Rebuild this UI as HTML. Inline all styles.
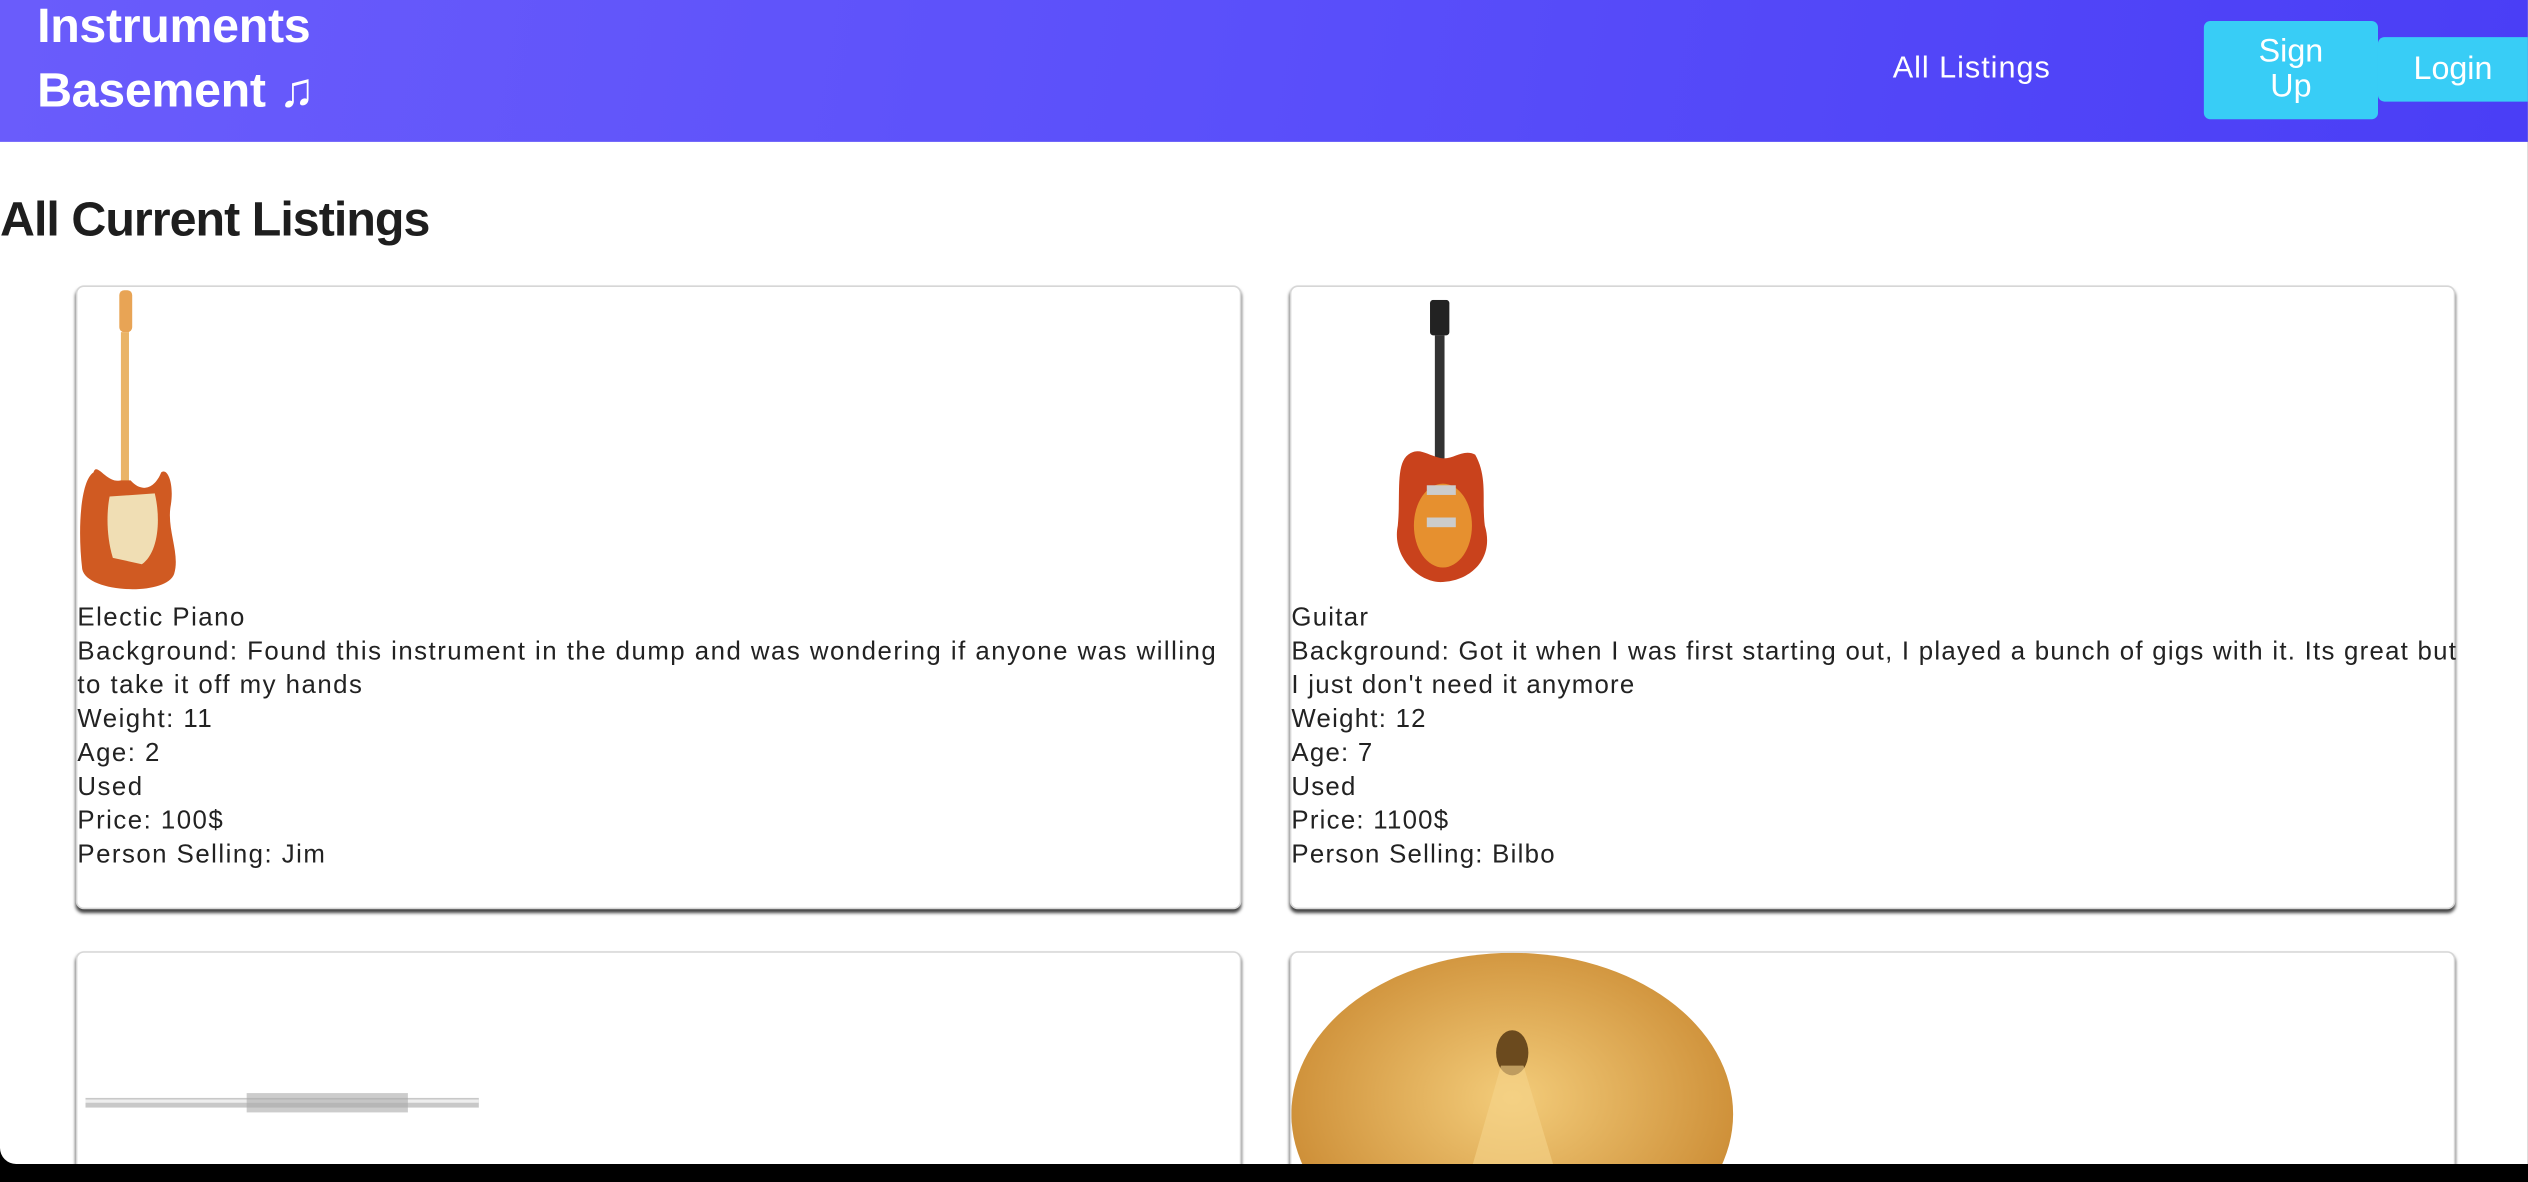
<!DOCTYPE html>
<html><head><meta charset="utf-8"><style>
html,body{margin:0;padding:0;width:2528px;height:1182px;overflow:hidden;background:#000;}
#w{position:absolute;left:0;top:0;width:1568px;height:733px;transform:scale(1.6122);transform-origin:0 0;font-family:"Liberation Sans",sans-serif;overflow:hidden;}
#pg{position:absolute;left:0;top:0;width:1568px;height:722px;background:#fff;overflow:hidden;border-bottom-left-radius:10px;}
#hd{position:absolute;left:0;top:0;width:1568px;height:88px;background:linear-gradient(100deg,#6a5cfb 0%,#5a4ffa 50%,#4a3ef6 100%);color:#fff;}
.t{position:absolute;left:23px;font-weight:bold;font-size:30px;line-height:40px;letter-spacing:-0.2px;}
.b{position:absolute;background:#38cdf6;color:#fff;font-size:20px;text-align:center;border-radius:4px;}
h1{position:absolute;left:0;top:116px;margin:0;font-size:30px;letter-spacing:-0.6px;color:#1e1e1e;font-weight:bold;line-height:42px;}
.c{position:absolute;width:721px;border:1px solid #d6d6d6;border-radius:5px;box-shadow:0 2px 2px #444;background:#fff;}
.tx{position:absolute;left:0;top:195px;font-size:16px;letter-spacing:0.92px;line-height:21px;color:#222;white-space:nowrap;}
</style></head><body><div id="w"><div id="pg">
<div id="hd">
<div class="t" style="top:-3px">Instruments</div>
<div class="t" style="top:37px">Basement ♫</div>
<div style="position:absolute;left:1174px;top:32px;font-size:19px;letter-spacing:0.6px">All Listings</div>
<div class="b" style="left:1367px;top:13px;width:108px;height:61px;line-height:22px;padding-top:8px;box-sizing:border-box">Sign<br>Up</div>
<div class="b" style="left:1475px;top:23px;width:93px;height:40px;line-height:40px;border-radius:4px 0 0 4px">Login</div>
</div>
<h1>All Current Listings</h1>
<div class="c" style="left:47px;top:177px;height:385px">
<svg style="position:absolute;left:0;top:0" width="70" height="190" viewBox="0 0 70 190">
<rect x="26" y="2" width="8" height="26" rx="3" fill="#e8a455"/>
<rect x="27" y="28" width="5" height="110" fill="#eab467"/>
<path d="M10 115 C2 120,0 150,3 175 C6 190,55 192,60 178 C64 165,55 150,58 135 C60 122,56 112,52 115 C48 125,40 128,33 120 L27 120 C18 122,12 108,10 115Z" fill="#d05a22"/>
<path d="M20 130 L48 128 C52 145,50 165,40 172 L22 168 C18 155,18 140,20 130Z" fill="#f0deb4"/>
</svg>
<div class="tx">Electic Piano<br>Background: Found this instrument in the dump and was wondering if anyone was willing<br>to take it off my hands<br>Weight: 11<br>Age: 2<br>Used<br>Price: 100$<br>Person Selling: Jim</div>
</div>
<div class="c" style="left:800px;top:177px;height:385px">
<svg style="position:absolute;left:60px;top:8px" width="70" height="178" viewBox="0 0 70 178">
<rect x="26" y="0" width="12" height="22" rx="2" fill="#222"/>
<rect x="29" y="22" width="6" height="80" fill="#333"/>
<path d="M14 95 C4 100,8 120,6 140 C2 160,20 176,34 175 C52 174,66 160,60 140 C58 125,62 110,54 96 C46 92,40 100,32 98 C24 96,20 92,14 95Z" fill="#c9421c"/>
<ellipse cx="34" cy="140" rx="18" ry="26" fill="#e6902f"/>
<rect x="24" y="115" width="18" height="6" fill="#ccc"/><rect x="24" y="135" width="18" height="6" fill="#ccc"/>
</svg>
<div class="tx" style="letter-spacing:0.78px">Guitar<br>Background: Got it when I was first starting out, I played a bunch of gigs with it. Its great but<br>I just don't need it anymore<br>Weight: 12<br>Age: 7<br>Used<br>Price: 1100$<br>Person Selling: Bilbo</div>
</div>
<div class="c" style="left:47px;top:590px;height:140px">
<svg style="position:absolute;left:5px;top:85px" width="245" height="16"><rect x="0" y="5" width="244" height="6" fill="#c8c8c8"/><rect x="0" y="6" width="244" height="2" fill="#eee"/><rect x="100" y="2" width="100" height="12" fill="#aaa" opacity=".6"/></svg>
</div>
<div class="c" style="left:800px;top:590px;height:140px;overflow:hidden">
<svg style="position:absolute;left:0;top:0" width="280" height="140"><defs><radialGradient id="g" cx="50%" cy="45%" r="60%"><stop offset="0" stop-color="#f3cc7a"/><stop offset="1" stop-color="#c8862e"/></radialGradient></defs><ellipse cx="137" cy="100" rx="137" ry="100" fill="url(#g)"/><ellipse cx="137" cy="62" rx="10" ry="14" fill="#6b4a1e"/><path d="M130 70 L110 140 L165 140 L144 70Z" fill="#f5d48a" opacity=".6"/></svg>
</div>
</div></div></body></html>
